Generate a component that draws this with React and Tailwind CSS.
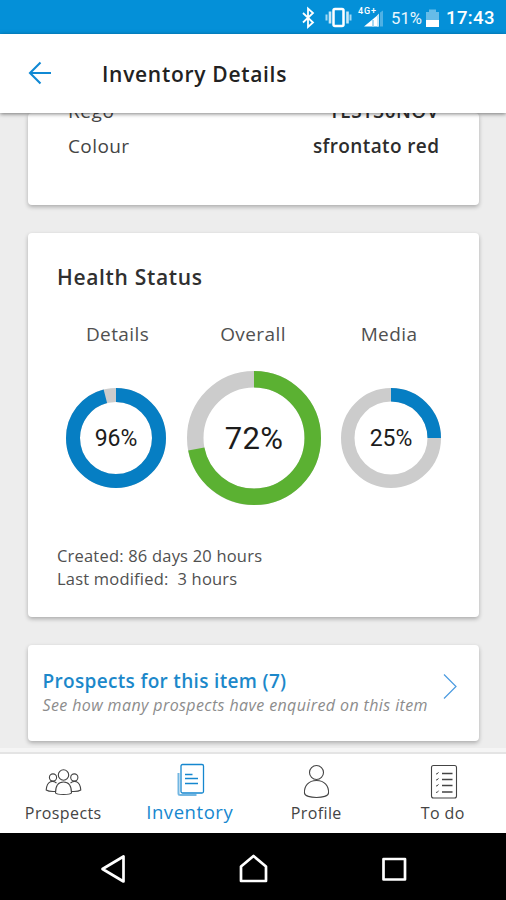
const card = "w-[451px] shrink-0 rounded-[4px] bg-white shadow-[0_2px_4px_rgba(0,0,0,0.28)]";

function Donut({ size, stroke, value, color, textClass }) {
  const c = size / 2;
  const r = (size - stroke) / 2;
  return (
    <div className="grid place-items-center">
      <svg className="col-start-1 row-start-1" width={size} height={size}>
        <g transform={`rotate(-90 ${c} ${c})`} fill="none" strokeWidth={stroke}>
          <circle cx={c} cy={c} r={r} stroke="#cccccc" />
          <circle cx={c} cy={c} r={r} stroke={color} pathLength="100" strokeDasharray={`${value} ${100 - value}`} />
        </g>
      </svg>
      <span className={`col-start-1 row-start-1 font-[Roboto,sans-serif] text-[#1c1c1c] ${textClass}`}>{value}%</span>
    </div>
  );
}

function StatusBar() {
  return (
    <div className="flex h-[34px] shrink-0 items-center bg-[#0490d8] pl-[300px] pt-[2px] font-[Roboto,sans-serif] text-white">
      <svg width="142" height="28" viewBox="300 4 142 28" fill="none" className="shrink-0">
        <path d="M303 13l10 9.500-5 4.500V8.500l5 4.500-10 9.500" stroke="#fff" strokeWidth="1.800" />
        <rect x="333.500" y="9" width="10" height="17" rx="1.500" stroke="#fff" strokeWidth="2.500" />
        <path d="M330 11.500v12M347.500 11.500v12" stroke="#c8e8f8" strokeWidth="2.600" />
        <path d="M326.500 14.500v6M350.500 14.500v6" stroke="#a4d8f2" strokeWidth="2" />
        <path d="M378.500 14.500v12h-14.500z" fill="#fff" />
        <path d="M373 20v6.500" stroke="#a4d8f2" strokeWidth="2" />
        <path d="M377 26.500V15.500l2-2v13z" fill="#c8e8f8" />
        <path d="M380 26.500V12.500l3-2v16z" fill="#4fb1e4" />
        <text x="358" y="13.500" fill="#fff" fontSize="9" fontWeight="500" fontFamily="Roboto" textLength="18">4G+</text>
        <text x="391" y="24" fill="#e8f6fd" fontSize="16.500" fontFamily="Roboto" textLength="31" lengthAdjust="spacingAndGlyphs">51%</text>
        <path d="M426 12h3v-2.500h7V12h3v9h-13z" fill="#66bce8" />
        <path d="M426 20h13v7h-13z" fill="#fff" />
      </svg>
      <span className="ml-[4px] text-[18.500px] leading-none font-medium tracking-[0.4px]">17:43</span>
    </div>
  );
}

function Tab({ label, active, children }) {
  return (
    <div className={`flex w-[126.500px] flex-col items-center pt-[7px] ${active ? "text-[#1587cf]" : "text-[#444]"}`}>
      <svg width="40" height="38" viewBox="0 0 40 38" fill="none" stroke="currentColor" strokeWidth="1.100">{children}</svg>
      <span className={active ? "mt-[1px] text-[18.500px] leading-[24px] tracking-[0.55px]" : "mt-[2px] text-[16px] leading-[24px] tracking-[0.4px]"}>{label}</span>
    </div>
  );
}

export default function App() {
  return (
    <div className="flex h-[900px] w-[506px] flex-col overflow-hidden bg-[#ededed] font-['Open_Sans',sans-serif] text-[#333]">
      <StatusBar />
      <header className="relative z-10 flex h-[79px] shrink-0 items-center bg-white pl-[28px] shadow-[0_1px_4px_rgba(0,0,0,0.5)]">
        <svg width="24" height="24" className="-mt-[1px]" fill="none" stroke="#1089d4" strokeWidth="2.100">
          <path d="M23 12H2M12.500 1.500L2 12l10.500 10.500" />
        </svg>
        <h1 className="ml-[50px] text-[21px] leading-[30px] font-[550] tracking-[0.7px] text-[#222]">Inventory Details</h1>
      </header>

      <main className="flex h-[635px] shrink-0 flex-col gap-[28px] overflow-hidden pl-[28px]">
        <section className={`${card} flex h-[92px] flex-col px-[40px] text-[19px] leading-[34px] text-[#444]`}>
          <div className="-mt-[19px] flex justify-between">
            <span className="tracking-[0.6px]">Rego</span>
            <span className="font-semibold tracking-[0.45px] text-[#2d2d2d]">TEST30NOV</span>
          </div>
          <div className="mt-[0.500px] flex justify-between">
            <span className="tracking-[0.4px]">Colour</span>
            <span className="-mr-[0.400px] font-[560] tracking-[0.38px] text-[#2d2d2d]">sfrontato red</span>
          </div>
        </section>

        <section className={`${card} flex h-[384px] flex-col`}>
          <h2 className="mt-[29px] ml-[29px] text-[21px] leading-[30px] font-[560] tracking-[0.67px] text-[#303030]">Health Status</h2>
          <div className="mt-[27px] flex text-[19px] leading-[30px] tracking-[0.4px] text-[#505050]">
            <span className="ml-[38.500px] w-[102px] text-center">Details</span>
            <span className="ml-[17.500px] w-[134px] text-center">Overall</span>
            <span className="ml-[18px] w-[102px] text-center">Media</span>
          </div>
          <div className="mt-[22px] ml-[38px] flex items-center">
            <Donut size={100} stroke={14} value={96} color="#067ec3" textClass="text-[23px] pt-[2px]" />
            <div className="ml-[21px]"><Donut size={134} stroke={16.5} value={72} color="#5bb132" textClass="pt-[2px] text-[31px] tracking-[0.3px]" /></div>
            <div className="ml-[20px]"><Donut size={100} stroke={13.5} value={25} color="#067ec3" textClass="text-[23px] pt-[2px]" /></div>
          </div>
          <div className="mt-[40px] ml-[29px] text-[16.500px] leading-[22.500px] tracking-[0.2px] whitespace-pre text-[#505050]">
            <p>Created: 86 days 20 hours</p>
            <p>Last modified:  3 hours</p>
          </div>
        </section>

        <section className={`${card} flex h-[96px] pt-[23px] pl-[14.500px]`}>
          <div className="w-[400.500px] whitespace-nowrap">
            <h3 className="text-[19px] leading-[27px] font-[580] tracking-[0.33px] text-[#1c88ca]">Prospects for this item (7)</h3>
            <p className="-mt-[1px] text-[16px] leading-[23px] tracking-[0.39px] text-[#8c8c8c] italic">See how many prospects have enquired on this item</p>
          </div>
          <svg className="mt-[5px]" width="16" height="28" fill="none" stroke="#4b9be0" strokeWidth="1.200"><path d="M1 1.500L13 13.500 1 25.500" /></svg>
        </section>
      </main>

      <div className="z-10 h-[4px] shrink-0 bg-[#f5f5f5]" />
      <nav className="z-10 flex h-[81px] shrink-0 border-t-2 border-[#e4e4e4] bg-white">
        <Tab label="Prospects">
          <circle cx="20.500" cy="14" r="5.200" />
          <circle cx="10" cy="16.500" r="3.600" />
          <circle cx="31.300" cy="16.500" r="3.600" />
          <path d="M12.500 32c0-7 3-11 8-11s8 4 8 11c-1.500 2-14.500 2-16 0zM13.500 22c-2-1.500-4-2-6-1.200-2.500 1-4 4.500-4.300 8.200 2 1.500 5.500 1.700 9 1.500M27.500 22c2-1.500 4-2 6-1.200 2.500 1 4 4.500 4.300 8.200-2 1.500-5.500 1.700-9 1.500" />
        </Tab>
        <Tab label="Inventory" active>
          <rect x="11" y="3.500" width="22.500" height="28.500" rx="1.500" strokeWidth="1.300" />
          <path d="M8.500 12v20.500c0 1 1 1.500 2 1.500h16" strokeOpacity=".6" strokeWidth="2" />
          <path d="M15 13.500h7.500M15 17.500h13M15 22.500h13" strokeWidth="1.300" />
        </Tab>
        <Tab label="Profile">
          <circle cx="20.500" cy="11.500" r="7" />
          <path d="M8.500 32c-.5-7 4-12.500 12-12.500s12.500 5.500 12 12.500c0 6-24 6-24 0z" />
        </Tab>
        <Tab label="To do">
          <rect x="8.500" y="4.500" width="25" height="32.500" rx="2" />
          <path d="M19 12.500h10.500M19 18.500h10.500M19 24.500h10.500M19 31h10.500" strokeWidth="1.500" />
          <path d="M13 12.500l1 .7 1.500-2M13 18.500l1 .7 1.500-2M13 24.500l1 .7 1.500-2M13 31l1 .7 1.500-2" strokeWidth=".9" />
        </Tab>
      </nav>

      <footer className="flex h-[67px] shrink-0 items-center bg-black pl-[98px]">
        <svg width="312" height="34" viewBox="98 850 312 34" fill="none" stroke="#fff" strokeWidth="2.700" strokeLinejoin="round">
          <path d="M102.500 869l21-12.500v25z" />
          <path d="M241 881v-14.500l12.500-10.500 12.500 10.500V881z" />
          <rect x="383.500" y="859" width="21.500" height="20.500" />
        </svg>
      </footer>
    </div>
  );
}
